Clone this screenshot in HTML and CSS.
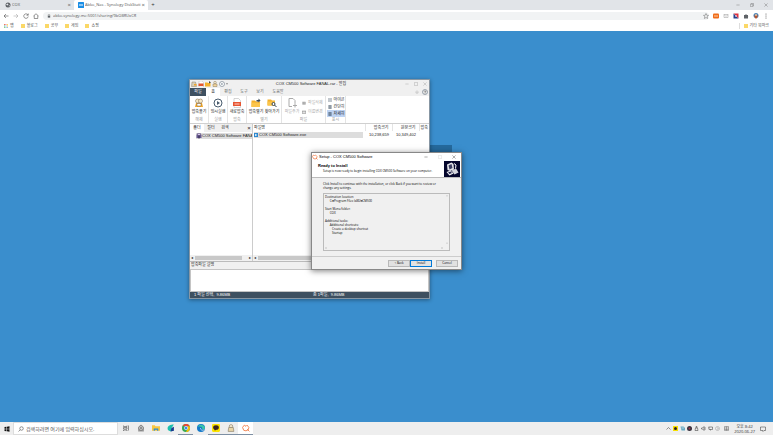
FILE: index.html
```html
<!DOCTYPE html>
<html lang="ko">
<head>
    <meta charset="UTF-8">
    <meta name="viewport" content="width=device-width, initial-scale=1.0">
    <title>Abko_Nas - Synology DiskStation</title>
    <link rel="stylesheet" href="styles.css">
</head>
<body>
    <header class="browser">
        <div class="tab-bar">
            <div class="tab">
                <svg class="icon" viewBox="0 0 12 12"><circle cx="6" cy="6" r="5" fill="#5f6368"/><path d="M2 5l3-2 2 2-2 2zM7 8l3-2-1 3z" fill="#e8eaed"/></svg>
                <span class="tab-title">COX</span>
                <button class="close" aria-label="탭 닫기">×</button>
            </div>
            <div class="tab active">
                <svg class="icon" viewBox="0 0 12 12"><rect width="12" height="12" rx="1" fill="#1a8ee6"/><path d="M2 5h8M2 7h8" stroke="#fff"/></svg>
                <span class="tab-title">Abko_Nas - Synology DiskStati</span>
                <button class="close" aria-label="탭 닫기">×</button>
            </div>
            <button class="new-tab" aria-label="새 탭">+</button>
            <div class="window-buttons">
                <button aria-label="최소화"><svg class="icon-s" viewBox="0 0 10 10"><path d="M1 5h8" class="line"/></svg></button>
                <button aria-label="이전 크기로"><svg class="icon-s" viewBox="0 0 10 10"><path d="M1 3h6v6H1zM3 3V1h6v6H7" class="line"/></svg></button>
                <button aria-label="닫기"><svg class="icon-s" viewBox="0 0 10 10"><path d="M1 1l8 8M9 1L1 9" class="line"/></svg></button>
            </div>
        </div>
        <div class="toolbar">
            <button aria-label="뒤로"><svg class="icon" viewBox="0 0 12 12"><path d="M11 6H2M6 2L2 6l4 4" class="line dark"/></svg></button>
            <button aria-label="앞으로"><svg class="icon" viewBox="0 0 12 12"><path d="M1 6h9M6 2l4 4-4 4" class="line light"/></svg></button>
            <button aria-label="새로고침"><svg class="icon" viewBox="0 0 12 12"><path d="M10 4a4.500 4.500 0 1 0 .5 3M10.500 1v3.500H7" class="line dark"/></svg></button>
            <button aria-label="홈"><svg class="icon" viewBox="0 0 12 12"><path d="M1 6l5-4.500L11 6M2.500 5v6h7V5" class="line dark"/></svg></button>
            <div class="address">
                <svg class="icon-s" viewBox="0 0 10 10"><path d="M2 4h6v5H2z" fill="#5f6368"/><path d="M3 4V2.500a2 2 0 0 1 4 0V4" class="line"/></svg>
                <input type="text" aria-label="주소" value="abko.synology.me:5001/sharing/9bO8RUxCR">
                <svg class="icon" viewBox="0 0 12 12"><path d="M6 1l1.500 3.500 3.500.3-2.700 2.400.9 3.800L6 9l-3.200 2 .9-3.800L1 4.800l3.500-.3z" class="line"/></svg>
            </div>
            <div class="extensions">
                <svg class="icon" viewBox="0 0 12 12"><rect y="1" width="12" height="10" rx="2" fill="#ef6c1a"/><path d="M2 6h8" stroke="#ffd0a8" stroke-width="2"/></svg>
                <svg class="icon" viewBox="0 0 12 12"><path d="M2 3h8v6H2zM2 3l4 4 4-4" class="line light"/></svg>
                <svg class="icon" viewBox="0 0 12 12"><path d="M1 1h10v10z" fill="#e0323e"/><path d="M1 1v10h10z" fill="#27408b"/><path d="M4 6h4" stroke="#fff" stroke-width="2"/></svg>
                <svg class="icon" viewBox="0 0 12 12"><path d="M2 4h2.500a1.500 1.500 0 1 1 3 0H10v2.500a1.500 1.500 0 0 1 0 2V11H2z" fill="#5f6368"/></svg>
                <svg class="icon" viewBox="0 0 12 12"><circle cx="6" cy="5" r="5" fill="#4b83b8"/><path d="M3 4h6v4l-3 4-3-4z" fill="#b8552f"/><circle cx="6" cy="4" r="2" fill="#e4c3a2"/></svg>
                <svg class="icon" viewBox="0 0 12 12"><circle cx="6" cy="2" r="1" fill="#444"/><circle cx="6" cy="6" r="1" fill="#444"/><circle cx="6" cy="10" r="1" fill="#444"/></svg>
            </div>
        </div>
        <nav class="bookmarks">
            <a href="#"><svg class="icon-s" viewBox="0 0 10 10"><path d="M0 0h3v2H0zM4 0h2v2H4z" fill="#ea4335"/><path d="M8 0h2v2H8zM8 4h2v2H8z" fill="#fbbc05"/><path d="M0 4h2v2H0zM0 8h2v2H0zM4 8h2v2H4z" fill="#34a853"/><path d="M4 4h2v2H4zM8 8h2v2H8z" fill="#4285f4"/></svg>앱</a>
            <a href="#"><i class="folder"></i>블로그</a>
            <a href="#"><i class="folder"></i>공부</a>
            <a href="#"><i class="folder"></i>게임</a>
            <a href="#"><i class="folder"></i>쇼핑</a>
            <a href="#" class="other"><i class="folder"></i>기타 북마크</a>
        </nav>
    </header>

    <main class="desktop">
        <div class="behind"></div>

        <section class="window archive">
            <div class="title-bar">
                <div class="quick">
                    <svg class="icon" viewBox="0 0 12 12"><path d="M2 2h7l2 9H1z" fill="#d9cfb8" stroke="#8d8268"/><path d="M6 6h5v3H6z" fill="#f0a52a"/></svg>
                    <svg class="icon" viewBox="0 0 12 12"><path d="M2 0h6l3 3v9H2z" fill="#fff" stroke="#bbb"/><path d="M1 5h10v5H1z" fill="#e2572e"/></svg>
                    <svg class="icon" viewBox="0 0 12 12"><path d="M0 3h5l1 1h5v7H0z" fill="#f4b22c"/><path d="M8 0l4 3-4 2z" fill="#41474c"/></svg>
                    <svg class="icon" viewBox="0 0 12 12"><circle cx="6" cy="3" r="2.500" fill="#f5ead1" stroke="#8b7a58"/><path d="M2 6h8v5H2z" fill="#f3d59a" stroke="#8b7a58"/></svg>
                    <svg class="icon" viewBox="0 0 12 12"><circle cx="6" cy="6" r="5" fill="#fff" stroke="#47596b"/><path d="M5 4l3 2-3 2z" fill="#47596b"/></svg>
                    <svg class="arrow" viewBox="0 0 4 4"><path d="M0 1h4L2 3z" fill="#333"/></svg>
                </div>
                <h1>COX CM500 Software FANAL.rar - 알집</h1>
                <div class="window-buttons">
                    <button aria-label="최소화"><svg class="icon-s" viewBox="0 0 10 10"><path d="M1 5h8" class="line light"/></svg></button>
                    <button aria-label="최대화"><svg class="icon-s" viewBox="0 0 10 10"><path d="M1 1h8v8H1z" class="line light"/></svg></button>
                    <button aria-label="닫기"><svg class="icon-s" viewBox="0 0 10 10"><path d="M1 1l8 8M9 1L1 9" class="line light"/></svg></button>
                </div>
            </div>
            <nav class="menu">
                <button class="file">파일</button>
                <button class="current">홈</button>
                <button>편집</button>
                <button>도구</button>
                <button>보기</button>
                <button>도움말</button>
                <span class="help">
                    <svg class="icon-s" viewBox="0 0 10 10"><path d="M1 5l4-3 4 3M3 5v3h4V5" class="line light"/></svg>
                    <svg class="icon" viewBox="0 0 12 12"><circle cx="6" cy="6" r="5" fill="none" stroke="#47596b"/><path d="M4.500 5a1.500 1.500 0 1 1 1.500 1.500v1M6 8.500v1" class="line dark"/></svg>
                </span>
            </nav>
            <div class="ribbon">
                <div class="group">
                    <div class="tools">
                        <button><svg class="icon-l" viewBox="0 0 20 20"><path d="M4 10L2 18h16l-2-8z" fill="#f4a928"/><path d="M6 11h8v5H6z" fill="#fff" stroke="#77634a"/><circle cx="7" cy="6" r="4" fill="#f7e9c6" stroke="#77634a"/><circle cx="13" cy="6" r="4" fill="#f7e9c6" stroke="#77634a"/></svg>압축풀기</button>
                    </div>
                    <span class="group-name">해제</span>
                </div>
                <div class="group">
                    <div class="tools">
                        <button><svg class="icon-l" viewBox="0 0 20 20"><circle cx="10" cy="10" r="8" fill="#fff" stroke="#485b6d" stroke-width="2"/><path d="M8 6l6 4-6 4z" fill="#485b6d"/></svg>임시실행</button>
                    </div>
                    <span class="group-name">실행</span>
                </div>
                <div class="group">
                    <div class="tools">
                        <button><svg class="icon-l" viewBox="0 0 20 20"><path d="M4 1h9l4 4v14H4z" fill="#fff" stroke="#aaa"/><path d="M2 8h16v8H2z" fill="#e75532"/><path d="M5 12h10" stroke="#ffd2c4" stroke-width="2"/></svg>새로압축</button>
                    </div>
                    <span class="group-name">압축</span>
                </div>
                <div class="group pair">
                    <div class="tools">
                        <button><svg class="icon-l" viewBox="0 0 20 20"><path d="M1 5h7l2 2h8v11H1z" fill="#f3b02a"/><path d="M1 9h17v9H1z" fill="#fbc54b"/><path d="M11 4h4V1l4 4-4 4V7h-4z" fill="#394957"/></svg>압축열기</button>
                        <button><svg class="icon-l" viewBox="0 0 20 20"><path d="M1 3h7l2 2h6v10H1z" fill="#f3b02a"/><path d="M1 7h15v8H1z" fill="#fbc54b"/><circle cx="13" cy="12" r="3" fill="#fff" stroke="#394957" stroke-width="2"/><path d="M15 14l4 4" stroke="#394957" stroke-width="2"/></svg>찾아가기</button>
                    </div>
                    <span class="group-name">열기</span>
                </div>
                <div class="group files">
                    <div class="tools">
                        <button disabled><svg class="icon-l" viewBox="0 0 20 20"><path d="M4 1h8l4 4v6M4 1v16h6" fill="none" stroke="#aaa" stroke-width="2"/><path d="M12 15h8M16 11v8" stroke="#aaa" stroke-width="2"/></svg>파일추가</button>
                        <div class="stack">
                            <button disabled><svg class="icon-s" viewBox="0 0 10 10"><path d="M1 2h8v7H1z" fill="#999"/><path d="M3 1v8M6 1v8" stroke="#ddd"/></svg>파일삭제</button>
                            <button disabled><svg class="icon-s" viewBox="0 0 10 10"><path d="M0 3h10v5H0z" fill="none" stroke="#888" stroke-width="2"/></svg>이름변경</button>
                        </div>
                    </div>
                    <span class="group-name">파일</span>
                </div>
                <div class="group view">
                    <div class="stack">
                        <button><svg class="icon-s" viewBox="0 0 10 10"><path d="M1 1h3v3H1zM6 1h3v3H6zM1 6h3v3H1zM6 6h3v3H6z" fill="#34475a"/></svg>아이콘</button>
                        <button><svg class="icon-s" viewBox="0 0 10 10"><path d="M1 2h8M1 5h8M1 8h8" stroke="#34475a" stroke-width="2"/></svg>간단히</button>
                        <button class="on"><svg class="icon-s" viewBox="0 0 10 10"><path d="M1 2h8M1 5h8M1 8h8" stroke="#34475a" stroke-width="2"/></svg>자세히</button>
                    </div>
                    <span class="group-name">표시</span>
                </div>
            </div>
            <div class="panes">
                <aside class="side">
                    <div class="side-tabs">
                        <button class="current">폴더</button>
                        <button>필터</button>
                        <button>검색</button>
                        <button class="side-close" aria-label="창 닫기">×</button>
                    </div>
                    <ul class="tree">
                        <li><svg class="icon" viewBox="0 0 12 12"><path d="M1 3h10v7H1z" fill="#675a93"/><path d="M3 1h6v4H3z" fill="#d6c9e8" stroke="#44366c"/><path d="M6 5v6" stroke="#2e2544" stroke-width="2"/></svg><span>COX CM500 Software FANA</span></li>
                    </ul>
                    <div class="scroll"><span>◂</span><i class="thumb"></i><span>▸</span></div>
                </aside>
                <div class="list">
                    <table>
                        <thead>
                            <tr><th class="name">파일명</th><th>압축크기</th><th>원본크기</th><th class="cut">압축</th></tr>
                        </thead>
                        <tbody>
                            <tr><td class="name"><span class="file-name"><svg class="icon-s" viewBox="0 0 10 10"><path d="M0 0h10v10H0z" fill="#2a87cf"/><path d="M3 2l5 3-5 3z" fill="#fff"/></svg>COX CM500 Software.exe</span></td><td>10,238,659</td><td>10,349,402</td><td class="cut"></td></tr>
                        </tbody>
                    </table>
                    <div class="scroll"><span>◂</span><i class="thumb"></i></div>
                </div>
            </div>
            <label class="memo-label" for="memo">압축파일 설명</label>
            <textarea id="memo" class="memo" readonly></textarea>
            <footer class="status"><span>1 파일 선택,&nbsp; 9.86MB</span><span>총 1파일,&nbsp; 9.86MB</span></footer>
        </section>

        <section class="window setup">
            <div class="title-bar">
                <svg class="icon" viewBox="0 0 12 12"><path d="M3 2L1 5l2 4 3 1 3-1 1-4-3-3-2 1zM8 8l3 3" fill="none" stroke="#ef7843" stroke-width="1.500"/></svg>
                <h2>Setup - COX CM500 Software</h2>
                <div class="window-buttons">
                    <button aria-label="Minimize"><svg class="icon-s" viewBox="0 0 10 10"><path d="M1 5h8" class="line dark"/></svg></button>
                    <button aria-label="Maximize" disabled><svg class="icon-s" viewBox="0 0 10 10"><path d="M1 1h8v8H1z" class="line faint"/></svg></button>
                    <button aria-label="Close"><svg class="icon-s" viewBox="0 0 10 10"><path d="M1 1l8 8M9 1L1 9" class="line dark"/></svg></button>
                </div>
            </div>
            <div class="setup-head">
                <div>
                    <h3>Ready to Install</h3>
                    <p>Setup is now ready to begin installing COX CM500 Software on your computer.</p>
                </div>
                <svg class="wizard" viewBox="0 0 32 32"><rect width="32" height="32" fill="#05062c"/><path d="M6 7l9-4 4 3 1 11-8 3-5-2z" fill="#e6e6ea"/><path d="M9 9l6-3 2 8-6 3z" fill="#3b3d62"/><path d="M15 19l9-4 5 8-8 4z" fill="#d4d5dc"/><path d="M5 22l8-3 6 6-8 4z" fill="#f4f4f6"/><path d="M8 23l5-2 3 3-5 2z" fill="#24264f"/><path d="M20 5l4 3-1 7" fill="none" stroke="#fff" stroke-width="2"/></svg>
            </div>
            <div class="setup-body">
                <label for="summary">Click Install to continue with the installation, or click Back if you want to review or<br>change any settings.</label>
                <div class="summary">
                    <textarea id="summary" readonly>Destination location:
      C:₩Program Files (x86)₩CM500

Start Menu folder:
      COX

Additional tasks:
      Additional shortcuts:
         Create a desktop shortcut
         Startup</textarea>
                    <div class="v-scroll"><svg class="arrow" viewBox="0 0 4 4"><path d="M0 3l2-2 2 2" class="line light"/></svg><svg class="arrow" viewBox="0 0 4 4"><path d="M0 1l2 2 2-2" class="line light"/></svg></div>
                    <div class="h-scroll"><svg class="arrow" viewBox="0 0 4 4"><path d="M3 0L1 2l2 2" class="line light"/></svg><svg class="arrow" viewBox="0 0 4 4"><path d="M1 0l2 2-2 2" class="line light"/></svg></div>
                </div>
            </div>
            <div class="setup-buttons">
                <button>&lt; Back</button>
                <button class="default">Install</button>
                <button class="cancel">Cancel</button>
            </div>
        </section>
    </main>

    <footer class="taskbar">
        <button class="start" aria-label="시작"><svg class="icon" viewBox="0 0 12 12"><path d="M1 2l4-.5v4H1zM6 1.300l5-.8v5H6zM1 6.500h4v4L1 10zM6 6.500h5v5l-5-.8z" fill="#111"/></svg></button>
        <div class="search">
            <svg class="icon" viewBox="0 0 12 12"><circle cx="7" cy="5" r="3.500" class="line dark"/><path d="M4.500 7.500L1 11" class="line dark"/></svg>
            <input type="text" aria-label="검색" placeholder="검색하려면 여기에 입력하십시오.">
        </div>
        <div class="apps">
            <button aria-label="작업 보기"><svg class="icon" viewBox="0 0 12 12"><path d="M1 1v2h7V1M1 5h7v3H1zM1 12v-2h7v2M11 1v10" class="line dark"/></svg></button>
            <button aria-label="프로그램"><svg class="icon-m" viewBox="0 0 14 14"><path d="M2 6l5-5 5 5v7H2z" fill="#999"/><circle cx="7" cy="7" r="4" fill="#ddd" stroke="#555"/><path d="M5 7h4M7 5v4" stroke="#444"/></svg></button>
            <button aria-label="파일 탐색기"><svg class="icon-m" viewBox="0 0 14 14"><path d="M0 2h5l1 2h8v8H0z" fill="#f7c63f"/><path d="M3 8h8v4H9v-2H5v2H3z" fill="#2b8bd6"/></svg></button>
            <button aria-label="웨일"><svg class="icon-m" viewBox="0 0 14 14"><path d="M1 8C1 3 6 1 12 1L8 7l4 5c-6 2-11 0-11-4z" fill="#1cbfae"/><path d="M8 7l4-2v7l-6 1z" fill="#1c398e"/></svg></button>
            <button class="running" aria-label="Chrome"><svg class="icon-m" viewBox="0 0 14 14"><circle cx="7" cy="7" r="7" fill="#34a853"/><path d="M1 3.500A7 7 0 0 1 13.500 4H7z" fill="#ea4335"/><path d="M7 4h6.300A7 7 0 0 1 7 14l3-6z" fill="#fbbc05"/><circle cx="7" cy="7" r="3" fill="#4285f4" stroke="#fff"/></svg></button>
            <button aria-label="Edge"><svg class="icon-m" viewBox="0 0 14 14"><circle cx="7" cy="7" r="7" fill="#1479c9"/><path d="M1 5a7 7 0 0 1 13 2c0 3-5 3-5 1 1-3-4-5-8-3z" fill="#37c6a7"/><path d="M6 7c0 4 4 5 7 3" fill="none" stroke="#fff"/></svg></button>
            <button class="running" aria-label="카카오톡"><svg class="icon-m" viewBox="0 0 14 14"><rect width="14" height="14" rx="2" fill="#fbe300"/><ellipse cx="7" cy="6" rx="5" ry="4" fill="#3a2422"/><path d="M4 8l1 4 3-3z" fill="#3a2422"/></svg></button>
            <button class="running" aria-label="알집"><svg class="icon-m" viewBox="0 0 14 14"><circle cx="7" cy="4" r="3" fill="#f7ead0" stroke="#7c725f"/><path d="M3 6h8l1 7H2z" fill="#e9d6a8" stroke="#7c725f"/></svg></button>
            <button class="running front" aria-label="Setup"><svg class="icon-m" viewBox="0 0 14 14"><path d="M4 2L1 6l2 5 4 1 4-2 1-4-3-4-2 2zM9 9l4 4" fill="none" stroke="#ef7843" stroke-width="1.500"/></svg></button>
        </div>
        <div class="tray">
            <svg class="icon-t" viewBox="0 0 10 10"><path d="M1 7l4-4 4 4" class="line dark"/></svg>
            <svg class="icon-t" viewBox="0 0 10 10"><rect width="10" height="10" fill="#f7e000"/><circle cx="5" cy="5" r="3" fill="#32201d"/></svg>
            <svg class="icon-t" viewBox="0 0 10 10"><path d="M1 1h6l3 3v5H3z" fill="#69a9c2"/><path d="M3 4h5" stroke="#fff"/></svg>
            <svg class="icon-t" viewBox="0 0 10 10"><circle cx="5" cy="5" r="5" fill="#37333f"/><circle cx="5" cy="5" r="2" fill="#a03848"/></svg>
            <svg class="icon-t" viewBox="0 0 10 10"><path d="M3 4h4l1 5H2zM4 4V1h2v3" class="line dark"/></svg>
            <svg class="icon-t" viewBox="0 0 10 10"><path d="M1 4h2l3-3v8L3 6H1zM8 2v6" class="line dark"/></svg>
            <svg class="icon-t" viewBox="0 0 10 10"><path d="M2 2h7v5H2zM5 7v2M0 1v4" class="line dark"/></svg>
            <svg class="icon-t" viewBox="0 0 10 10"><circle cx="5" cy="5" r="4" class="line light"/><path d="M4 3l3 2-3 2" class="line light"/></svg>
            <svg class="icon-t ime" viewBox="0 0 10 10"><path d="M1 1h8v8H1zM1 4h8M1 7h8M5 1v8" class="line"/></svg>
            <time datetime="2020-06-27">오후 8:42<br>2020-06-27</time>
            <svg class="icon" viewBox="0 0 12 12"><path d="M1 2h10v7H8l-2 2v-2H1z" class="line dark"/></svg>
        </div>
    </footer>
</body>
</html>
```
FILE: styles.css
```css
* {
    box-sizing: border-box;
}
body {
    margin: 0;
    height: 100vh;
    display: flex;
    flex-direction: column;
    font-family: "Open Sans", "Noto Sans CJK KR", sans-serif;
    font-size: 4px;
    line-height: 6px;
    color: #333;
    overflow: hidden;
}
button, input, textarea {
    font: inherit;
    color: inherit;
    margin: 0;
    padding: 0;
    border: none;
    background: none;
    outline: none;
}
button {
    display: flex;
    align-items: center;
    justify-content: center;
    white-space: nowrap;
}
h1, h2, h3, p, ul {
    margin: 0;
    padding: 0;
    font-size: inherit;
    font-weight: normal;
}
a {
    color: inherit;
    text-decoration: none;
}
svg {
    display: block;
    flex: none;
}
.icon {
    width: 6px;
    height: 6px;
}
.icon-s {
    width: 4px;
    height: 4px;
}
.icon-t {
    width: 5px;
    height: 5px;
}
.icon-m {
    width: 8px;
    height: 8px;
}
.icon-l {
    width: 10px;
    height: 10px;
}
.arrow {
    width: 2px;
    height: 2px;
}
.line {
    fill: none;
    stroke: #666;
    stroke-width: 1;
}
.line.dark {
    stroke: #333;
}
.line.light {
    stroke: #999;
}
.line.faint {
    stroke: #ccc;
}

/* browser */
.tab-bar {
    display: flex;
    align-items: center;
    height: 10px;
    background: #e1e4e8;
}
.tab {
    display: flex;
    align-items: center;
    gap: 1px;
    width: 74px;
    height: 10px;
    padding: 0 3px 0 5px;
    color: #555;
}
.tab.active {
    padding-left: 4px;
    background: #fff;
    border-radius: 2px 2px 0 0;
}
.tab-title {
    flex: 1;
    overflow: hidden;
    white-space: nowrap;
}
.close, .new-tab {
    font-size: 6px;
}
.new-tab {
    width: 10px;
}
.window-buttons {
    display: flex;
    align-items: center;
    margin-left: auto;
}
.tab-bar .window-buttons button {
    width: 14px;
}
.toolbar {
    display: flex;
    align-items: center;
    gap: 4px;
    height: 11px;
    padding: 0 4px 0 3px;
    background: #fff;
}
.address {
    display: flex;
    align-items: center;
    gap: 2px;
    flex: 1;
    height: 8px;
    padding: 0 0 0 4px;
    border-radius: 4px;
    background: #f1f3f4;
}
.address input {
    flex: 1;
    min-width: 0;
    height: 6px;
    color: #555;
}
.extensions {
    display: flex;
    gap: 4px;
}
.bookmarks {
    display: flex;
    align-items: center;
    gap: 7px;
    height: 10px;
    padding: 0 4px;
    background: #fff;
    color: #555;
}
.bookmarks a {
    display: flex;
    align-items: center;
    gap: 2px;
}
.folder {
    width: 4px;
    height: 4px;
    background: #fbd867;
}
.bookmarks .other {
    margin-left: auto;
    padding-left: 4px;
    border-left: 1px solid #ddd;
}

/* desktop */
.desktop {
    position: relative;
    flex: 1;
    background: #3a8ecd;
}
.behind {
    position: absolute;
    left: 425px;
    top: 114px;
    width: 27px;
    height: 12px;
    background: #25699c;
}
.window {
    position: absolute;
    display: flex;
    flex-direction: column;
    background: #f0f0f0;
}
.archive {
    left: 189px;
    top: 48px;
    width: 241px;
    height: 220px;
    border: 1px solid #8796a3;
    box-shadow: 0 1px 4px rgba(0, 0, 0, 0.4);
    font-family: "Liberation Sans", "Noto Sans CJK KR", sans-serif;
    color: #222;
}
.title-bar {
    display: flex;
    align-items: center;
    flex: none;
    height: 8px;
}
.title-bar button {
    width: 9px;
}
.archive h1 {
    flex: 1;
    padding-right: 8px;
    text-align: center;
}
.quick {
    display: flex;
    align-items: center;
    gap: 1px;
    padding-left: 1px;
}
.menu {
    display: flex;
    flex: none;
    height: 8px;
}
.menu button {
    width: 16px;
    color: #666;
}
.menu .file {
    background: #3e5060;
    color: #fff;
}
.menu .current {
    width: 14px;
    background: #fff;
    color: #222;
}
.menu button:last-of-type {
    width: 20px;
}
.help {
    display: flex;
    align-items: center;
    gap: 3px;
    margin-left: auto;
    padding-right: 1px;
}
.ribbon {
    display: flex;
    flex: none;
    height: 28px;
    background: #fff;
    border-bottom: 1px solid #d0d0d0;
}
.group {
    display: flex;
    flex-direction: column;
    align-items: center;
    justify-content: space-between;
    width: 19px;
    padding-top: 1px;
    border-right: 1px solid #e4e4e4;
}
.group.pair {
    width: 35px;
}
.group.files {
    width: 44px;
}
.group.view {
    width: 20px;
    padding-top: 0;
}
.tools {
    display: flex;
    align-items: flex-start;
}
.tools > button {
    flex-direction: column;
    width: 16px;
    gap: 1px;
    padding-top: 1px;
}
.stack button {
    gap: 2px;
    width: 18px;
    height: 7px;
    padding-left: 1px;
    justify-content: flex-start;
}
.files .stack {
    padding: 1px 0 0 1px;
}
.files .stack button {
    width: 22px;
    height: 9px;
}
.ribbon button:disabled {
    color: #aaa;
}
.stack .on {
    background: #bdd3f3;
}
.group-name {
    height: 6px;
    color: #999;
}
.panes {
    display: flex;
    flex: 1;
    min-height: 0;
    border-bottom: 1px solid #bbb;
}
.side {
    display: flex;
    flex-direction: column;
    flex: none;
    width: 63px;
    background: #fff;
    border-right: 1px solid #ccc;
}
.side-tabs {
    display: flex;
    height: 8px;
    background: #f0f0f0;
}
.side-tabs button {
    width: 14px;
}
.side-tabs .current {
    background: #fff;
}
.side-tabs .side-close {
    width: 6px;
    margin-left: auto;
    font-size: 6px;
}
.tree {
    flex: 1;
    list-style: none;
    padding: 1px 0 0 6px;
}
.tree li {
    display: flex;
    overflow: hidden;
    white-space: nowrap;
    background: #ddd;
}
.scroll {
    display: flex;
    align-items: center;
    gap: 2px;
    height: 6px;
    padding: 0 1px;
    background: #f0f0f0;
}
.thumb {
    flex: 1;
    height: 4px;
    background: #c8c8c8;
}
.side .thumb {
    margin-right: 5px;
}
.list {
    display: flex;
    flex-direction: column;
    justify-content: space-between;
    flex: 1;
    min-width: 0;
    background: #fff;
}
table {
    width: 100%;
    table-layout: fixed;
    border-collapse: collapse;
}
th, td {
    width: 27px;
    height: 7px;
    padding: 0 3px 0 0;
    font-weight: normal;
    text-align: right;
    white-space: nowrap;
    overflow: hidden;
}
th {
    border-right: 1px solid #e4e4e4;
}
.name {
    width: auto;
    padding: 0 2px 0 1px;
    text-align: left;
}
.cut {
    width: 10px;
    padding: 0 0 0 1px;
    border: none;
    text-align: left;
}
.file-name {
    display: flex;
    align-items: center;
    gap: 1px;
    background: #ddd;
}
.memo-label {
    flex: none;
    height: 7px;
    padding-left: 1px;
}
.memo {
    flex: none;
    height: 23px;
    background: #fff;
    border: 1px solid #c4c4c4;
    resize: none;
}
.status {
    display: flex;
    flex: none;
    height: 6px;
    padding-left: 4px;
    background: #3e5060;
    color: #fff;
}
.status span {
    flex: 1;
}
.status span:last-child {
    padding-left: 3px;
}

/* installer */
.setup {
    left: 311px;
    top: 121px;
    width: 151px;
    height: 118px;
    border: 1px solid #888;
    box-shadow: 0 1px 6px rgba(0, 0, 0, 0.5);
    font-size: 3px;
    line-height: 4px;
    color: #000;
}
.setup .title-bar {
    gap: 1px;
    background: #fff;
}
.setup h2, .setup h3 {
    font-family: "Liberation Sans", sans-serif;
    font-size: 4px;
}
.setup .title-bar button {
    width: 14px;
}
.setup-head {
    display: flex;
    flex: none;
    justify-content: space-between;
    height: 17px;
    padding: 0 1px 0 6px;
    background: #fff;
    border-bottom: 1px solid #bbb;
}
.setup-head h3 {
    padding-top: 3px;
    font-weight: bold;
}
.setup-head p {
    padding: 1px 0 0 5px;
    white-space: nowrap;
}
.wizard {
    width: 16px;
    height: 16px;
}
.setup-body {
    flex: 1;
    padding: 4px 11px;
}
.setup-body label {
    display: block;
    white-space: nowrap;
}
.summary {
    display: grid;
    grid-template-columns: 1fr 5px;
    grid-template-rows: 1fr 5px;
    height: 58px;
    margin-top: 3px;
    border: 1px solid #bbb;
}
.summary textarea {
    width: 100%;
    height: 100%;
    padding: 1px 0 0 1px;
    resize: none;
    overflow: hidden;
    white-space: pre;
}
.v-scroll, .h-scroll {
    display: flex;
    align-items: center;
    justify-content: space-between;
    padding: 1px;
}
.v-scroll {
    flex-direction: column;
}
.setup-buttons {
    display: flex;
    flex: none;
    align-items: center;
    justify-content: flex-end;
    height: 13px;
    padding-right: 3px;
    border-top: 1px solid #ccc;
}
.setup-buttons button {
    width: 22px;
    height: 7px;
    border: 1px solid #b8b8b8;
    background: #e1e1e1;
}
.setup-buttons .default {
    border-color: #0078d7;
}
.setup-buttons .cancel {
    margin-left: 4px;
}

/* taskbar */
.taskbar {
    display: flex;
    flex: none;
    height: 13px;
    background: #eee;
}
.start {
    width: 13px;
}
.search {
    display: flex;
    align-items: center;
    gap: 2px;
    width: 105px;
    padding-left: 4px;
    background: #fff;
    border: 1px solid #ddd;
    font-size: 5px;
}
.search input {
    flex: 1;
    min-width: 0;
    height: 8px;
}
.search input::placeholder {
    color: #555;
}
.apps {
    display: flex;
}
.apps button {
    width: 15px;
    border-bottom: 1px solid transparent;
}
.apps .running {
    border-bottom-color: #7d8fa3;
}
.apps .front {
    background: #fff;
}
.tray {
    display: flex;
    align-items: center;
    gap: 2px;
    margin-left: auto;
    padding-right: 7px;
}
.tray .ime {
    margin-left: 2px;
}
.tray time {
    padding: 0 3px;
    text-align: center;
    line-height: 5px;
}
```
